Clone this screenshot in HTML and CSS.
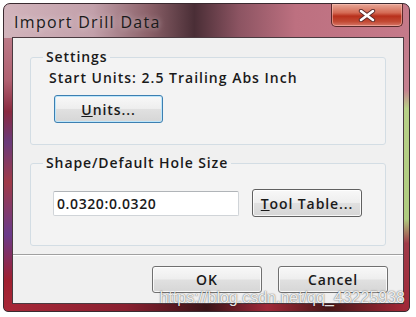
FILE: index.html
```html
<!DOCTYPE html>
<html>
<head>
<meta charset="utf-8">
<link rel="stylesheet" href="styles.css">
</head>
<body>
<div class="window">
  <div class="titlebar">
    <span class="title">Import Drill Data</span>
    <div class="close">
      <svg width="18" height="13" viewBox="0 0 18 13">
        <path d="M3 2 L15 11 M15 2 L3 11" stroke="#5a2a2a" stroke-width="4.4" stroke-linecap="round"/>
        <path d="M3 2 L15 11 M15 2 L3 11" stroke="#ffffff" stroke-width="2.6" stroke-linecap="round"/>
      </svg>
    </div>
  </div>
  <div class="client">
    <div class="content">
      <fieldset class="group group-settings">
        <legend class="legend">Settings</legend>
        <div class="units-text">Start Units: 2.5 Trailing Abs Inch</div>
        <button class="btn btn-default btn-units"><u>U</u>nits...</button>
      </fieldset>
      <fieldset class="group group-shape">
        <legend class="legend">Shape/Default Hole Size</legend>
        <div class="shape-row">
          <div class="input">0.0320:0.0320</div>
          <button class="btn btn-tool"><u>T</u>ool Table...</button>
        </div>
      </fieldset>
    </div>
    <div class="footer">
      <button class="btn btn-foot">OK</button>
      <button class="btn btn-foot">Cancel</button>
      <span class="watermark">https://blog.csdn.net/qq_43225938</span>
    </div>
  </div>
</div>
</body>
</html>
```
FILE: styles.css
```css
body {
  margin: 0;
  background: #ffffff;
  font-family: "Open Sans", "Noto Sans", sans-serif;
}

.window {
  margin: 3px 0 0 3px;
  width: 407px;
  height: 309px;
  box-sizing: border-box;
  border: 1px solid #3a2a30;
  border-radius: 7px 7px 5px 5px;
  padding: 0 5px 7px 8px;
  display: flex;
  flex-direction: column;
  background:
    linear-gradient(to right, #d2b4bc 0%, #c2a0aa 22%, #8a6068 36%, #4a2e36 47%, #8c5462 58%, #bd7080 72%, #c57a8a 100%) top left / 100% 34px no-repeat,
    linear-gradient(to bottom, #c48e9a 0%, #b06070 25%, #8a2a40 35%, #6a3a7a 45%, #a03a48 58%, #6a3a8a 75%, #a02030 90%, #a82838 100%) left top / 9px 100% no-repeat,
    linear-gradient(to bottom, #c27888 0%, #c58090 28%, #b8d088 34%, #b0cc80 70%, #a03a48 78%, #a02838 100%) right top / 6px 100% no-repeat,
    linear-gradient(to right, #a82838 0%, #8a2030 30%, #3a1418 50%, #a02838 65%, #4a1818 80%, #a82838 100%);
}

.titlebar {
  height: 33px;
  display: flex;
  justify-content: space-between;
  align-items: flex-start;
}

.title {
  margin: 9px 0 0 2px;
  font-size: 16px;
  line-height: 19px;
  letter-spacing: 1.3px;
  color: #1a1a1a;
  text-shadow: 0 0 6px rgba(255, 255, 255, 0.6);
}

.close {
  width: 72px;
  height: 23px;
  box-sizing: border-box;
  margin-right: 1px;
  border: 1px solid #5a2a2a;
  border-top: none;
  border-radius: 0 0 5px 5px;
  background: linear-gradient(to bottom, #e7a898 0%, #d46a54 40%, #b8301c 55%, #c24a34 80%, #d8786a 100%);
  box-shadow: inset 0 0 0 1px rgba(255, 200, 190, 0.5);
  display: flex;
  align-items: center;
  justify-content: center;
}

.client {
  flex: 1;
  border: 1px solid #4a3a40;
  background: #f0f0f0;
  display: flex;
  flex-direction: column;
}

.content {
  flex: 1;
  padding: 10px 17px 0 17px;
}

.group {
  margin: 0;
  padding: 0 0 0 12px;
  border: 1px solid #d3dde4;
  border-radius: 3px;
  background: #f3f3f3;
}

.legend {
  padding: 0 3px;
  font-size: 14px;
  font-weight: 600;
  letter-spacing: 0.9px;
  line-height: 18px;
  color: #1a1a1a;
}

.group-settings {
  height: 97px;
  box-sizing: border-box;
}

.units-text {
  margin: 3px 0 0 6px;
  font-size: 14px;
  font-weight: 600;
  letter-spacing: 1px;
  line-height: 18px;
  color: #1a1a1a;
}

.btn {
  font-family: inherit;
  font-size: 14px;
  font-weight: 600;
  letter-spacing: 0.9px;
  color: #1a1a1a;
  border: 1px solid #707070;
  border-radius: 3px;
  background: linear-gradient(to bottom, #f8f8f8 0%, #eeeeee 48%, #e0e0e0 52%, #d6d6d6 100%);
  box-shadow: inset 0 0 0 1px rgba(255, 255, 255, 0.8);
  padding: 0;
  cursor: default;
}

.btn-default {
  border-color: #3c7fb1;
  box-shadow: inset 0 0 0 1px #bde6fb;
}

.btn-units {
  margin: 8px 0 0 11px;
  width: 109px;
  height: 28px;
}

.group-shape {
  margin-top: 9px;
  height: 92px;
  box-sizing: border-box;
}

.shape-row {
  display: flex;
  align-items: center;
  gap: 13px;
  margin: 17px 0 0 10px;
}

.input {
  width: 186px;
  height: 25px;
  box-sizing: border-box;
  border: 1px solid #d0d4d8;
  border-top-color: #b0b4b8;
  border-radius: 2px;
  background: #ffffff;
  font-size: 14px;
  font-weight: 600;
  letter-spacing: 0.6px;
  line-height: 23px;
  padding-left: 3px;
  color: #1a1a1a;
}

.btn-tool {
  width: 110px;
  height: 28px;
  border-color: #606060;
}

.footer {
  position: relative;
  height: 49px;
  box-sizing: border-box;
  border-top: 1px solid #a0a0a0;
  box-shadow: inset 0 1px 0 #ffffff;
  display: flex;
  justify-content: flex-end;
  align-items: flex-start;
  gap: 16px;
  padding: 11px 15px 0 0;
}

.btn-foot {
  width: 110px;
  height: 27px;
}

.watermark {
  position: absolute;
  right: -2px;
  bottom: -3px;
  font-family: "Liberation Sans", sans-serif;
  font-size: 16px;
  line-height: 17px;
  color: rgba(255, 255, 255, 0.9);
  text-shadow: 0 0 1px rgba(0, 0, 0, 0.55), 0 0 2px rgba(0, 0, 0, 0.3);
  pointer-events: none;
}
```
